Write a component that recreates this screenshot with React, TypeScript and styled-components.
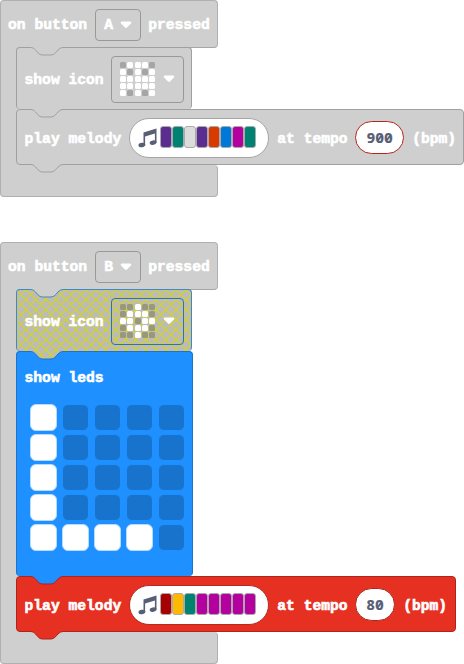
import React from "react";
import styled, { createGlobalStyle } from "styled-components";

const Global = createGlobalStyle`
  * { box-sizing: border-box; }
  body { margin: 0; background: #fff; }
`;

type Tone = "gray" | "hatch" | "blue" | "red";
const tones: Record<Tone, { fill: string; line: string }> = {
  gray: { fill: "#cfcfcf", line: "#a0a0a0" },
  hatch: { fill: "#bbb", line: "#3f88c4" },
  blue: { fill: "#1e90ff", line: "#1c73c9" },
  red: { fill: "#e63022", line: "#ac251c" },
};

const Workspace = styled.main`
  width: 464px;
  height: 664px;
  overflow: hidden;
  display: flex;
  flex-direction: column;
  gap: 45px;
  color: #fff;
  font: bold 14.667px/20px "Liberation Mono", "DejaVu Sans Mono", monospace;
  -webkit-text-stroke: 0.6px currentColor;
  white-space: pre;
`;

const EventBlock = styled.section`
  display: flex;
  flex-direction: column;
`;

const Header = styled.header`
  width: 218px;
  height: 48px;
  padding: 2px 0 0 7px;
  display: flex;
  align-items: center;
  background: #cfcfcf;
  border: 1px solid #b0b0b0;
  border-radius: 4px 4px 4px 0;
  border-bottom-color: #a6a6a6;
`;

const Body = styled.div`
  display: flex;
  flex-direction: column;
  align-items: flex-start;
  margin-top: -1px;
  padding-left: 15px;
  border-left: 1px solid #b0b0b0;
  background: linear-gradient(#cfcfcf, #cfcfcf) 0 0 / 19px 100% no-repeat;
`;

const Footer = styled.footer`
  width: 218px;
  height: 32px;
  background: #cfcfcf;
  border: 1px solid #b0b0b0;
  border-top: 0;
  border-radius: 0 4px 4px 4px;
`;

const Statement = styled.div<{ $tone: Tone; $w: number; $h: number; $last?: boolean }>`
  position: relative;
  width: ${(p) => p.$w}px;
  height: ${(p) => p.$h}px;
  padding: 1px 0 0 7.5px;
  display: flex;
  align-items: center;
  background: ${(p) => tones[p.$tone].fill};
  border: 1px solid ${(p) => tones[p.$tone].line};
  border-bottom-width: ${(p) => (p.$last ? 1 : 0)}px;
  border-radius: 4px;
`;

const LedStatement = styled(Statement)`
  flex-direction: column;
  align-items: flex-start;
  padding-top: 16px;
`;

const Texture = styled.svg`
  position: absolute;
  left: 0;
  top: 0;
  width: 100%;
  height: 100%;
  border-radius: 3px;
`;

const TabShape = styled.svg<{ $bottom?: boolean }>`
  position: absolute;
  z-index: 1;
  left: 12px;
  ${(p) => (p.$bottom ? "bottom: -9px;" : "top: -1px;")}
`;

const Label = styled.span<{ $before?: number; $after?: number }>`
  position: relative;
  margin-left: ${(p) => p.$before ?? 0}px;
  margin-right: ${(p) => p.$after ?? 0}px;
`;

const StatementLabel = styled(Label)`
  padding-top: 2px;
`;

const Dropdown = styled.div<{ $w: number; $h: number; $line?: string }>`
  position: relative;
  width: ${(p) => p.$w}px;
  height: ${(p) => p.$h}px;
  display: flex;
  align-items: center;
  justify-content: space-between;
  padding: 0 8px;
  border: 1px solid ${(p) => p.$line ?? "#999"};
  border-radius: 4px;
`;

const LedIcon = styled.div`
  display: grid;
  grid-template-columns: repeat(5, 6px);
  gap: 1.2px;
`;

const Dot = styled.i<{ $on: boolean; $off: string }>`
  height: 6px;
  border-radius: 1.5px;
  background: ${(p) => (p.$on ? "#fff" : p.$off)};
`;

const Pill = styled.div<{ $line: string }>`
  width: 140px;
  height: 40px;
  display: flex;
  align-items: center;
  padding-left: 8px;
  gap: 3px;
  border: 1px solid ${(p) => p.$line};
  border-radius: 20px;
  background: #fff;
`;

const Notes = styled.div`
  display: flex;
  margin-top: -1px;
`;

const Note = styled.i<{ $c: string }>`
  width: 12px;
  height: 22px;
  border: 1px solid #aaa;
  border-radius: 3px;
  background: ${(p) => p.$c};
`;

const NumberField = styled.div<{ $w: number; $line: string }>`
  width: ${(p) => p.$w}px;
  height: 33px;
  padding-bottom: 2px;
  display: flex;
  align-items: center;
  justify-content: center;
  border: 1px solid ${(p) => p.$line};
  border-radius: 17px;
  background: #fff;
  color: #575e75;
  font-family: "Noto Sans Mono", "Liberation Mono", monospace;
  -webkit-text-stroke-width: 0.2px;
`;

const Leds = styled.div`
  display: grid;
  grid-template-columns: repeat(5, 27px);
  gap: 3px 5px;
  margin: 16px 0 0 5.5px;
`;

const Led = styled.i<{ $on: boolean }>`
  width: 27px;
  height: 27px;
  border: 1px solid ${(p) => (p.$on ? "#b5dbff" : "#1e90ff")};
  border-radius: 6px;
  background: ${(p) => (p.$on ? "#fff" : "#1873cc")};
`;

/** Crossed diagonals, 10px apart, through the point (x, y). */
const HatchLines = ({ x, y, clip }: { x: number; y: number; clip?: string }) => {
  const d = Array.from({ length: 34 }, (_, i) => {
    const k = x + (i - 8) * 10;
    return `M${k} ${y}l80 80M${k} ${y}l-80 80`;
  }).join("");
  return <path d={d} fill="none" stroke="#d4d421" strokeWidth="1.1" clipPath={clip} />;
};

const Tab = ({ tone, line, bottom }: { tone: Tone; line: string; bottom?: boolean }) => {
  const d = "M1 .5C4 .5 5 1.5 6.5 3L9 5.8Q10.8 8 13 8H22Q24.5 8 26.5 5.8L29 3Q31 .5 34 .5";
  const fill = tones[tone].fill;
  return (
    <TabShape width="36" height="9" $bottom={bottom}>
      <path d={d + "V0H1Z"} fill={fill} />
      <path d={bottom ? "M4 -1H32V1H4Z" : "M2 0H33V1H2Z"} fill={fill} />
      {tone === "hatch" && (
        <>
          <clipPath id="tab-clip">
            <path d={d + "V0H1Z"} />
          </clipPath>
          <HatchLines x={-13} y={-1.5} clip="url(#tab-clip)" />
        </>
      )}
      <path d={d} fill="none" stroke={line} />
    </TabShape>
  );
};

const Caret = () => (
  <svg width="12" height="8" viewBox="0 0 12 8">
    <path d="M2 .5H10C11.300 .5 11.800 1.500 10.900 2.500L7.200 6.300C6.400 7.100 5.600 7.100 4.800 6.300L1.100 2.500C.2 1.500 .7 .5 2 .5Z" fill="#fff" />
  </svg>
);

const MusicIcon = () => (
  <svg width="19" height="20" viewBox="0 0 19 20">
    <path d="M5.500 4.500L18.500 .5V14.500H16.900V5.600L7.100 8.600V17H5.500Z" fill="#575e75" />
    <ellipse cx="3.900" cy="17" rx="3.500" ry="2.200" transform="rotate(-12 3.900 17)" fill="#575e75" />
    <ellipse cx="15.100" cy="14.600" rx="3.500" ry="2.200" transform="rotate(-12 15.100 14.600)" fill="#575e75" />
  </svg>
);

const IconPicture = ({ rows, off }: { rows: string[]; off: string }) => (
  <LedIcon>
    {rows.join("").split("").map((c, i) => (
      <Dot key={i} $on={c === "#"} $off={off} />
    ))}
  </LedIcon>
);

const EventHeader = ({ button }: { button: string }) => (
  <Header>
    <Label $after={8}>on button</Label>
    <Dropdown $w={46} $h={32}>
      <span>{button}</span>
      <Caret />
    </Dropdown>
    <Label $before={7}>pressed</Label>
  </Header>
);

const ShowIcon = ({ tone, rows, off }: { tone: Tone; rows: string[]; off: string }) => (
  <Statement $tone={tone} $w={176} $h={62}>
    {tone === "hatch" && (
      <Texture>
        <HatchLines x={-1} y={-0.5} />
      </Texture>
    )}
    <Tab tone="gray" line={tones[tone].line} />
    <StatementLabel $after={7.5}>show icon</StatementLabel>
    <Dropdown $w={73} $h={47} $line={tone === "gray" ? "#999" : "#2a73b5"}>
      <IconPicture rows={rows} off={off} />
      <Caret />
    </Dropdown>
  </Statement>
);

type MelodyProps = {
  tone: Tone;
  above: Tone;
  width: number;
  notes: string[];
  tempo: string;
  fieldWidth: number;
  pill: string;
  field: string;
};

const PlayMelody = ({ tone, above, width, notes, tempo, fieldWidth, pill, field }: MelodyProps) => (
  <Statement $tone={tone} $w={width} $h={56} $last>
    <Tab tone={above} line={tones[tone].line} />
    <StatementLabel $after={8}>play melody</StatementLabel>
    <Pill $line={pill}>
      <MusicIcon />
      <Notes>
        {notes.map((c, i) => (
          <Note key={i} $c={c} />
        ))}
      </Notes>
    </Pill>
    <StatementLabel $before={8} $after={7.5}>at tempo</StatementLabel>
    <NumberField $w={fieldWidth} $line={field}>{tempo}</NumberField>
    <StatementLabel $before={8}>(bpm)</StatementLabel>
    <Tab tone={tone} line={tones[tone].line} bottom />
  </Statement>
);

const leds = ["#....", "#....", "#....", "#....", "####."].join("").split("");

export default function App() {
  return (
    <>
      <Global />
      <Workspace>
        <EventBlock>
          <EventHeader button="A" />
          <Body>
            <ShowIcon tone="gray" off="#a5a5a5" rows={[".###.", "#.#.#", "#####", "#####", "#.#.#"]} />
            <PlayMelody
              tone="gray"
              above="gray"
              width={448}
              notes={["#5c2d91", "#008272", "#dcdcdc", "#5c2d91", "#d83b01", "#0078d7", "#b4009e", "#008272"]}
              tempo="900"
              fieldWidth={49}
              pill="#a5a5a5"
              field="#b3261e"
            />
          </Body>
          <Footer />
        </EventBlock>
        <EventBlock>
          <EventHeader button="B" />
          <Body>
            <ShowIcon tone="hatch" off="#99987a" rows={["..#..", ".###.", "##.##", ".###.", "..#.."]} />
            <LedStatement $tone="blue" $w={177} $h={225}>
              <Tab tone="hatch" line={tones.blue.line} />
              <Label>show leds</Label>
              <Leds>
                {leds.map((c, i) => (
                  <Led key={i} $on={c === "#"} />
                ))}
              </Leds>
            </LedStatement>
            <PlayMelody
              tone="red"
              above="blue"
              width={440}
              notes={["#a80000", "#ffb900", "#008272", "#b4009e", "#b4009e", "#b4009e", "#b4009e", "#b4009e"]}
              tempo="80"
              fieldWidth={40}
              pill="#b52a20"
              field="#a8261c"
            />
          </Body>
          <Footer />
        </EventBlock>
      </Workspace>
    </>
  );
}
